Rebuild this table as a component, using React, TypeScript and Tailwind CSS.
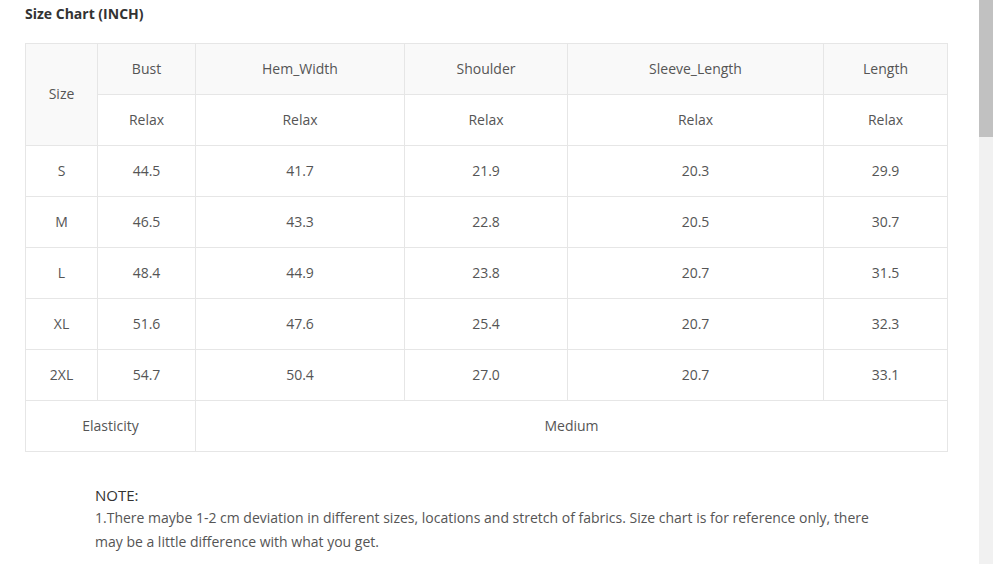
const cols = ['Bust', 'Hem_Width', 'Shoulder', 'Sleeve_Length', 'Length'];
const widths = ['w-[72px]', 'w-[98px]', 'w-[209px]', 'w-[163px]', 'w-[256px]', 'w-[124px]'];

const rows: [string, string[]][] = [
  ['S', ['44.5', '41.7', '21.9', '20.3', '29.9']],
  ['M', ['46.5', '43.3', '22.8', '20.5', '30.7']],
  ['L', ['48.4', '44.9', '23.8', '20.7', '31.5']],
  ['XL', ['51.6', '47.6', '25.4', '20.7', '32.3']],
  ['2XL', ['54.7', '50.4', '27.0', '20.7', '33.1']],
];

const cell = 'border border-[#e6e6e6] h-[51px] p-0 pb-[2px] text-center align-middle font-normal';

export default function App() {
  return (
    <div className="flex h-[564px] w-[993px] overflow-hidden bg-white font-['Open_Sans',sans-serif]">
      <div className="flex-1 pl-[25px] pt-[4px]">
        {/* Title */}
        <h3 className="text-[14px] font-bold leading-[20px] text-[#333]">Size Chart (INCH)</h3>

        <table className="mt-[19px] table-fixed border-collapse text-[14px] text-[#555]">
          <colgroup>
            {widths.map((w, i) => (
              <col key={i} className={w} />
            ))}
          </colgroup>
          <thead>
            <tr className="bg-[#f9f9f9]">
              <th rowSpan={2} className={cell}>
                Size
              </th>
              {cols.map((c) => (
                <th key={c} className={cell}>
                  {c}
                </th>
              ))}
            </tr>
            <tr>
              {cols.map((c) => (
                <th key={c} className={cell}>
                  Relax
                </th>
              ))}
            </tr>
          </thead>
          <tbody>
            {rows.map(([size, vals]) => (
              <tr key={size}>
                <td className={cell}>{size}</td>
                {vals.map((v, i) => (
                  <td key={i} className={cell}>
                    {v}
                  </td>
                ))}
              </tr>
            ))}
            <tr>
              <td colSpan={2} className={cell}>
                Elasticity
              </td>
              <td colSpan={4} className={cell}>
                Medium
              </td>
            </tr>
          </tbody>
        </table>

        {/* Note */}
        <div className="ml-[70px] mt-[32px] w-[780px]">
          <p className="text-[15px] font-medium leading-[22px] text-[#333]">NOTE:</p>
          <p className="text-[14px] leading-[24px] text-[#555]">
            1.There maybe 1-2 cm deviation in different sizes, locations and stretch of fabrics. Size chart is for reference only, there may be a little difference with what you get.
          </p>
        </div>
      </div>

      {/* Scrollbar */}
      <div className="w-[14px] bg-[#f1f1f1]">
        <div className="h-[137px] bg-[#c1c1c1]" />
      </div>
    </div>
  );
}
